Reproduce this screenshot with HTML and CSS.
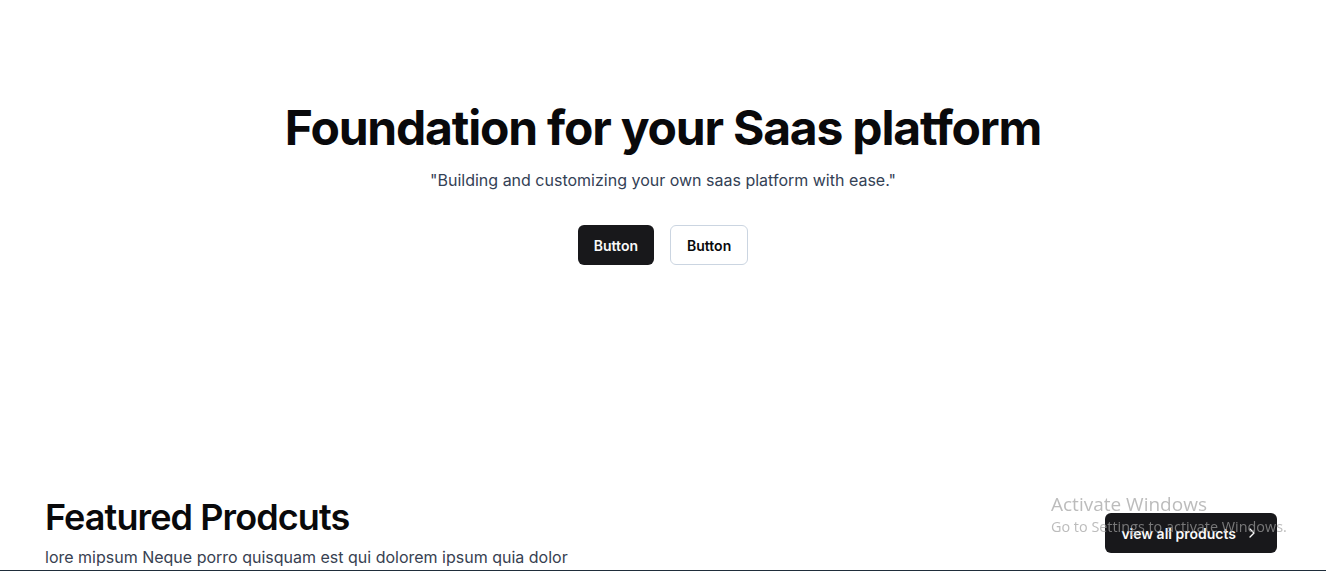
FILE: index.html
```html
<!DOCTYPE html>
<html lang="en">
<head>
<meta charset="utf-8">
<title>Saas platform</title>
<link rel="stylesheet" href="styles.css">
</head>
<body>
<main class="page">
  <section class="hero">
    <h1 class="hero-title">Foundation for your Saas platform</h1>
    <p class="hero-sub">"Building and customizing your own saas platform with ease."</p>
    <div class="hero-actions">
      <button class="btn btn-dark">Button</button>
      <button class="btn btn-outline">Button</button>
    </div>
  </section>
  <section class="featured">
    <div class="featured-head">
      <div class="featured-text">
        <h2 class="featured-title">Featured Prodcuts</h2>
        <p class="featured-sub">lore mipsum Neque porro quisquam est qui dolorem ipsum quia dolor</p>
      </div>
      <button class="btn btn-dark btn-view">view all products
        <svg class="chev" width="16" height="16" viewBox="0 0 24 24" fill="none" stroke="currentColor" stroke-width="2" stroke-linecap="round" stroke-linejoin="round"><path d="m9 18 6-6-6-6"/></svg>
      </button>
    </div>
  </section>
</main>
<div class="watermark">
  <div class="wm-title">Activate Windows</div>
  <div class="wm-sub">Go to Settings to activate Windows.</div>
</div>
<div class="taskbar-edge"></div>
</body>
</html>
```
FILE: styles.css
```css
* { box-sizing: border-box; }
html, body { margin: 0; padding: 0; background: #fff; }
body {
  font-family: Inter, "Noto Sans", sans-serif;
  color: #09090b;
  overflow: hidden;
  height: 571px;
}
.page { display: flex; flex-direction: column; }
.hero {
  display: flex;
  flex-direction: column;
  align-items: center;
  padding-top: 98px;
  height: 497px;
}
.hero-title {
  margin: 0;
  font-size: 48px;
  line-height: 60px;
  font-weight: 700;
  letter-spacing: -0.025em;
}
.hero-sub {
  margin: 10px 0 0;
  font-size: 16px;
  line-height: 24px;
  color: #334155;
}
.hero-actions {
  display: flex;
  gap: 16px;
  margin-top: 33px;
}
.btn {
  font-family: Inter, "Noto Sans", sans-serif;
  height: 40px;
  padding: 0 16px;
  border-radius: 6px;
  font-size: 14px;
  font-weight: 600;
  cursor: pointer;
  display: inline-flex;
  align-items: center;
}
.btn-dark { background: #18181b; color: #fafafa; border: 0; }
.btn-outline { background: #fff; color: #09090b; border: 1px solid #cbd5e1; }
.featured { padding: 0 49px 0 45px; }
.featured-head {
  display: flex;
  justify-content: space-between;
  align-items: flex-end;
}
.featured-title {
  margin: 0;
  font-size: 36px;
  line-height: 40px;
  font-weight: 600;
  letter-spacing: -0.025em;
}
.featured-sub {
  margin: 8px 0 0;
  font-size: 16px;
  line-height: 24px;
  color: #374151;
}
.btn-view { gap: 8px; padding: 0 17px 0 16px; margin-bottom: 16px; }
.watermark {
  position: fixed;
  left: 1051px;
  top: 492px;
  font-family: "Open Sans", "Noto Sans", sans-serif;
  color: rgba(160, 160, 160, 0.7);
  pointer-events: none;
}
.wm-title { font-size: 19px; line-height: 24px; }
.wm-sub { font-size: 14.4px; line-height: 21px; }
.taskbar-edge {
  position: fixed;
  left: 0; right: 0; bottom: 0;
  height: 1px;
  background: #1f2d3a;
}
```
